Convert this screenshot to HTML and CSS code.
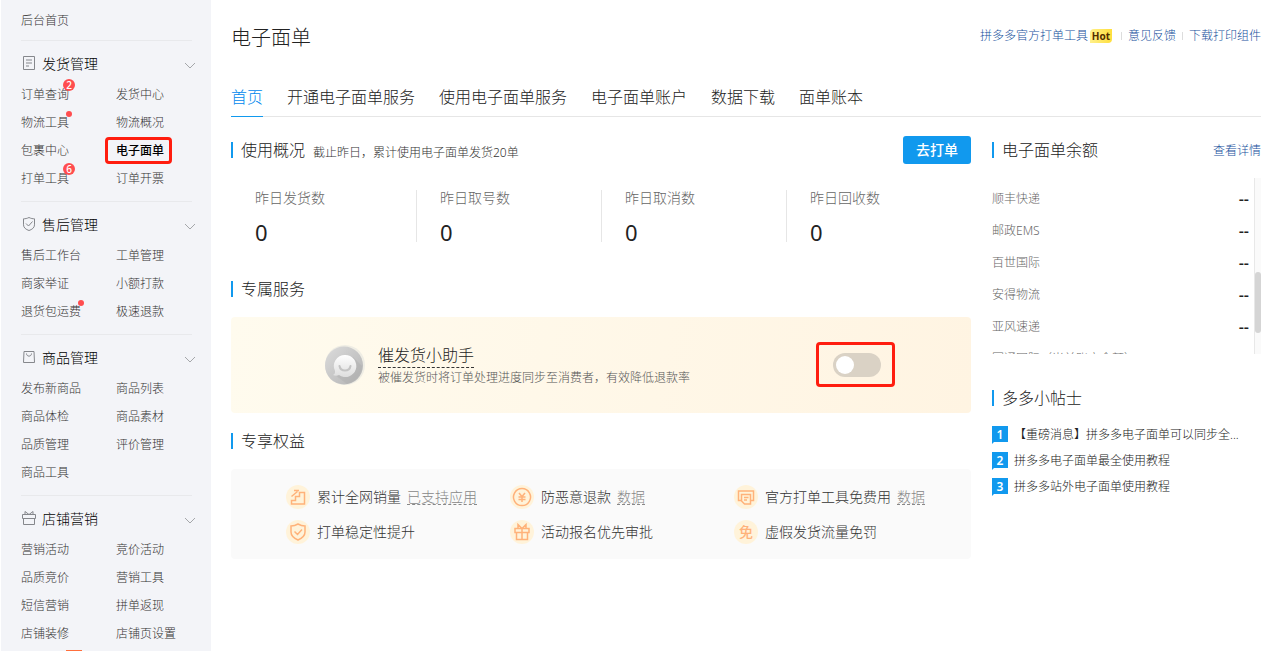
FILE: index.html
```html
<!DOCTYPE html>
<html lang="zh-CN">
<head>
    <meta charset="UTF-8">
    <meta name="viewport" content="width=device-width, initial-scale=1">
    <title>电子面单</title>
    <link rel="stylesheet" href="styles.css">
</head>
<body>
    <div class="layout">
        <nav class="sidebar">
            <a class="home" href="#">后台首页</a>
            <section class="group">
                <h2>
                    <svg class="group-icon" viewBox="0 0 16 16"><path d="M2.5 1.5h11v13h-11zM5 5h6M5 8h6M5 11h3"/></svg>
                    <span>发货管理</span>
                    <svg class="chevron" viewBox="0 0 12 8"><path d="M1 1l5 5 5-5"/></svg>
                </h2>
                <ul>
                    <li><a href="#">订单查询<i class="count">2</i></a></li>
                    <li><a href="#">发货中心</a></li>
                    <li><a href="#">物流工具<i class="dot"></i></a></li>
                    <li><a href="#">物流概况</a></li>
                    <li><a href="#">包裹中心</a></li>
                    <li><a class="active" href="#">电子面单</a></li>
                    <li><a href="#">打单工具<i class="count">6</i></a></li>
                    <li><a href="#">订单开票</a></li>
                </ul>
            </section>
            <section class="group">
                <h2>
                    <svg class="group-icon" viewBox="0 0 16 16"><path d="M8 1.5c2 1 3.800 1.300 5.500 1.300v6c0 3-2.500 4.700-5.500 5.700-3-1-5.500-2.700-5.500-5.700v-6C4.200 2.800 6 2.500 8 1.500zM5 7.500l2.500 2.500L11.500 5.500"/></svg>
                    <span>售后管理</span>
                    <svg class="chevron" viewBox="0 0 12 8"><path d="M1 1l5 5 5-5"/></svg>
                </h2>
                <ul>
                    <li><a href="#">售后工作台</a></li>
                    <li><a href="#">工单管理</a></li>
                    <li><a href="#">商家举证</a></li>
                    <li><a href="#">小额打款</a></li>
                    <li><a href="#">退货包运费<i class="dot"></i></a></li>
                    <li><a href="#">极速退款</a></li>
                </ul>
            </section>
            <section class="group">
                <h2>
                    <svg class="group-icon" viewBox="0 0 16 16"><path d="M3 2.500h10l.5 11h-11zM5.500 4.500c0 3.500 5 3.500 5 0"/></svg>
                    <span>商品管理</span>
                    <svg class="chevron" viewBox="0 0 12 8"><path d="M1 1l5 5 5-5"/></svg>
                </h2>
                <ul>
                    <li><a href="#">发布新商品</a></li>
                    <li><a href="#">商品列表</a></li>
                    <li><a href="#">商品体检</a></li>
                    <li><a href="#">商品素材</a></li>
                    <li><a href="#">品质管理</a></li>
                    <li><a href="#">评价管理</a></li>
                    <li><a href="#">商品工具</a></li>
                </ul>
            </section>
            <section class="group">
                <h2>
                    <svg class="group-icon" viewBox="0 0 16 16"><path d="M1.500 4.500h13v4h-13zM2.500 8.500v6h11v-6M8 4.500L4 1.500v3M8 4.500l4-3v3"/></svg>
                    <span>店铺营销</span>
                    <svg class="chevron" viewBox="0 0 12 8"><path d="M1 1l5 5 5-5"/></svg>
                </h2>
                <ul>
                    <li><a href="#">营销活动</a></li>
                    <li><a href="#">竞价活动</a></li>
                    <li><a href="#">品质竞价</a></li>
                    <li><a href="#">营销工具</a></li>
                    <li><a href="#">短信营销</a></li>
                    <li><a href="#">拼单返现</a></li>
                    <li><a href="#">店铺装修</a></li>
                    <li><a href="#">店铺页设置</a></li>
                    <li class="more"><i class="tag"></i></li>
                </ul>
            </section>
        </nav>

        <main class="main">
            <header class="page-head">
                <h1>电子面单</h1>
                <div class="links">
                    <a href="#">拼多多官方打单工具<b class="hot">Hot</b></a>
                    <a href="#">意见反馈</a>
                    <a href="#">下载打印组件</a>
                </div>
            </header>
            <nav class="tabs">
                <a class="current" href="#">首页</a>
                <a href="#">开通电子面单服务</a>
                <a href="#">使用电子面单服务</a>
                <a href="#">电子面单账户</a>
                <a href="#">数据下载</a>
                <a href="#">面单账本</a>
            </nav>

            <div class="columns">
                <div class="content">
                    <div class="section-head">
                        <h3>使用概况</h3>
                        <small>截止昨日，累计使用电子面单发货20单</small>
                        <button class="print-btn" type="button">去打单</button>
                    </div>
                    <dl class="stats">
                        <div><dt>昨日发货数</dt><dd>0</dd></div>
                        <div><dt>昨日取号数</dt><dd>0</dd></div>
                        <div><dt>昨日取消数</dt><dd>0</dd></div>
                        <div><dt>昨日回收数</dt><dd>0</dd></div>
                    </dl>

                    <div class="section-head"><h3>专属服务</h3></div>
                    <div class="service">
                        <svg class="service-icon" viewBox="0 0 40 40">
                            <defs>
                                <linearGradient id="disc" x1="0" y1="0" x2="1" y2="1"><stop offset="0" stop-color="#dcdcdc"/><stop offset="1" stop-color="#b2b2b2"/></linearGradient>
                                <linearGradient id="bubble" x1="0" y1="0" x2="0" y2="1"><stop offset="0" stop-color="#fff"/><stop offset="1" stop-color="#dedede"/></linearGradient>
                            </defs>
                            <circle cx="20" cy="20" r="20" fill="#efede4"/>
                            <circle cx="19" cy="20.500" r="19" fill="url(#disc)"/>
                            <path d="M28 12l9 9a19 19 0 0 1-15 18L10 30z" fill="#aaa" opacity=".35"/>
                            <path d="M20 10a11 11 0 1 1-6 20c-2 1-4 1-6 0 2-1 2-2 2-4a11 11 0 0 1 10-16z" fill="url(#bubble)"/>
                            <path d="M14.500 21c1 6 10 6 11 0" fill="none" stroke="#c4c4c4" stroke-width="2" stroke-linecap="round"/>
                        </svg>
                        <div class="service-text">
                            <label for="urge">催发货小助手</label>
                            <p>被催发货时将订单处理进度同步至消费者，有效降低退款率</p>
                        </div>
                        <span class="switch"><input type="checkbox" id="urge"></span>
                    </div>

                    <div class="section-head"><h3>专享权益</h3></div>
                    <ul class="benefits">
                        <li>
                            <svg viewBox="0 0 24 24"><circle cx="12" cy="12" r="12"/><path d="M5.500 19v-3.500h4v-4h4v-4h5V19zM5.500 11.500l6-5M8 5.500h5"/></svg>
                            <span>累计全网销量</span><a href="#">已支持应用</a>
                        </li>
                        <li>
                            <svg viewBox="0 0 24 24"><circle cx="12" cy="12" r="12"/><path d="M12 3.500a8.500 8.500 0 1 0 .01 0zM9 8l3 3.500L15 8M8.500 12h7M8.500 14.500h7M12 11.500V17"/></svg>
                            <span>防恶意退款</span><a href="#">数据</a>
                        </li>
                        <li>
                            <svg viewBox="0 0 24 24"><circle cx="12" cy="12" r="12"/><path d="M7 15.500H4.500V6h15v9.500H17M7.500 9.500h9V19h-6l-3-3zM10 12.500h4.500M10 15h3"/></svg>
                            <span>官方打单工具免费用</span><a href="#">数据</a>
                        </li>
                        <li>
                            <svg viewBox="0 0 24 24"><circle cx="12" cy="12" r="12"/><path d="M12 4c2.500 1.500 4.800 2 7 2v6c0 4-3.500 6.500-7 8-3.500-1.500-7-4-7-8V6c2.200 0 4.500-.5 7-2zM8.500 11.500l3 3 4.500-5"/></svg>
                            <span>打单稳定性提升</span>
                        </li>
                        <li>
                            <svg viewBox="0 0 24 24"><circle cx="12" cy="12" r="12"/><path d="M5 8.500h14v4H5zM6.500 12.500v7h11v-7M12 8.500v11M12 8.500L8 4.500v4M12 8.500l4-4v4"/></svg>
                            <span>活动报名优先审批</span>
                        </li>
                        <li>
                            <b class="free">免</b>
                            <span>虚假发货流量免罚</span>
                        </li>
                    </ul>
                </div>

                <aside class="side">
                    <div class="section-head">
                        <h3>电子面单余额</h3>
                        <a class="detail" href="#">查看详情</a>
                    </div>
                    <div class="balance">
                        <ul>
                            <li><span>顺丰快递</span><b>--</b></li>
                            <li><span>邮政EMS</span><b>--</b></li>
                            <li><span>百世国际</span><b>--</b></li>
                            <li><span>安得物流</span><b>--</b></li>
                            <li><span>亚风速递</span><b>--</b></li>
                            <li><span>圆通国际（当前账户余额）</span><b class="empty">0</b></li>
                        </ul>
                        <div class="scrollbar"><div class="thumb"></div></div>
                    </div>

                    <div class="section-head tips-head"><h3>多多小帖士</h3></div>
                    <ol class="tips">
                        <li><b>1</b><a href="#">【重磅消息】拼多多电子面单可以同步全...</a></li>
                        <li><b>2</b><a href="#">拼多多电子面单最全使用教程</a></li>
                        <li><b>3</b><a href="#">拼多多站外电子面单使用教程</a></li>
                    </ol>
                </aside>
            </div>
        </main>
    </div>
</body>
</html>
```
FILE: styles.css
```css
* { box-sizing: border-box; }
body {
    margin: 0;
    font-family: "Noto Sans", "Noto Sans CJK SC", sans-serif;
    font-size: 12px;
    font-weight: 300;
    color: #222;
    background: #fff;
}
h1, h2, h3, p, ul, ol, dl, dd {
    margin: 0;
    padding: 0;
    font-weight: 300;
}
ul, ol { list-style: none; }
a {
    color: inherit;
    text-decoration: none;
}
i { font-style: normal; }
.layout {
    display: flex;
    height: 100vh;
    overflow: hidden;
}

/* sidebar */
.sidebar {
    flex: 0 0 210px;
    margin-left: 1px;
    padding: 0 19px 0 20px;
    background: #f3f4f8;
    color: #333;
    overflow: hidden;
}
.home {
    display: block;
    padding-top: 2px;
    line-height: 38px;
}
.group {
    padding: 6px 0 8px;
    border-top: 1px solid #e8e9ec;
}
.group h2 {
    display: flex;
    align-items: center;
    height: 32px;
    margin: 0 -4px 2px 0;
    font-size: 14px;
    color: #000;
}
.group-icon {
    width: 16px;
    height: 16px;
    margin-right: 5px;
    fill: none;
    stroke: #85878c;
}
.chevron {
    width: 12px;
    height: 8px;
    margin: 6px 0 0 auto;
    fill: none;
    stroke: #a5a7aa;
}
.group ul {
    display: grid;
    grid-template-columns: 95px 1fr;
    line-height: 28px;
}
.group li { height: 28px; }
.group li a { position: relative; }
.group .active {
    color: #000;
    font-weight: 500;
}
.active::after {
    content: "";
    position: absolute;
    inset: -5px -8px -5px -11px;
    border: 3px solid #ff1d0f;
    border-radius: 4px;
}
.count, .dot {
    position: absolute;
    border-radius: 50%;
    background: #ff4d4f;
}
.count {
    top: -7px;
    right: -6px;
    width: 12px;
    height: 12px;
    font-size: 10px;
    font-weight: 500;
    line-height: 12px;
    text-align: center;
    color: #fff;
}
.dot {
    top: -3px;
    right: -3px;
    width: 6px;
    height: 6px;
}
.more { position: relative; }
.tag {
    position: absolute;
    top: 2px;
    left: 45px;
    width: 16px;
    height: 12px;
    background: #ff6f3c;
}

/* main */
.main {
    flex: 1;
    min-width: 0;
    padding: 0 21px 0 20px;
}
.page-head {
    display: flex;
    justify-content: space-between;
    align-items: center;
    height: 72px;
}
h1 {
    padding-top: 4px;
    font-size: 20px;
    line-height: 32px;
}
.links {
    display: flex;
    align-items: center;
    line-height: 16px;
    color: #16509c;
}
.links a {
    display: flex;
    align-items: center;
}
.links a + a::before {
    content: "";
    height: 8px;
    margin: 0 6px;
    border-left: 1px solid #ddd;
}
.hot {
    width: 22px;
    margin: 0 3px 0 2px;
    border-radius: 4px 0;
    background: linear-gradient(90deg, #fff08a, #ffdf3d);
    color: #522d00;
    font-size: 10px;
    font-weight: 700;
    line-height: 14px;
    text-align: center;
}
.tabs {
    display: flex;
    gap: 24px;
    height: 45px;
    border-bottom: 1px solid #e6e6e6;
    font-size: 16px;
}
.tabs a {
    height: 45px;
    padding-top: 8px;
    line-height: 34px;
}
.tabs .current {
    border-bottom: 1px solid #1199ee;
    color: #0088ee;
}
.columns {
    display: grid;
    grid-template-columns: minmax(0, 1fr) 269px;
    gap: 21px;
    padding-top: 19px;
}
.section-head {
    display: flex;
    align-items: center;
    height: 28px;
}
.section-head h3 {
    display: flex;
    align-items: center;
    gap: 8px;
    font-size: 16px;
    line-height: 28px;
}
.section-head h3::before {
    content: "";
    width: 2px;
    height: 16px;
    background: #1199ee;
}
.section-head small {
    margin-left: 8px;
    padding-top: 4px;
    font-size: 12px;
    color: #333;
}
.print-btn {
    width: 68px;
    height: 28px;
    margin-left: auto;
    padding: 0;
    border: none;
    border-radius: 3px;
    background: #1199ee;
    color: #fff;
    font-family: inherit;
    font-size: 14px;
    font-weight: 500;
    line-height: 28px;
    cursor: pointer;
}
.stats {
    display: grid;
    grid-template-columns: repeat(4, 1fr);
    margin: 26px 0 33px;
}
.stats div {
    height: 52px;
    padding-left: 24px;
}
.stats div + div {
    padding-left: 23px;
    border-left: 1px solid #e6e6e6;
}
.stats dt {
    font-size: 14px;
    line-height: 16px;
    color: #666;
}
.stats dd {
    margin-top: 16px;
    font-size: 22px;
    font-weight: 400;
    line-height: 20px;
}

.service {
    display: flex;
    align-items: center;
    gap: 13px;
    height: 96px;
    margin: 14px 0;
    padding: 0 90px 0 94px;
    border-radius: 4px;
    background: linear-gradient(100deg, #fffbee, #fff4e2);
}
.service-icon {
    width: 40px;
    height: 40px;
}
.service-text label {
    display: inline-block;
    border-bottom: 1px dashed #333;
    font-size: 16px;
    line-height: 24px;
}
.service-text p {
    line-height: 20px;
    color: #555;
}
.switch {
    position: relative;
    height: 24px;
    margin-left: auto;
}
.switch::after {
    content: "";
    position: absolute;
    inset: -11px -14px -10px -17px;
    border: 3px solid #ff1d0f;
    border-radius: 4px;
    pointer-events: none;
}
.switch input {
    appearance: none;
    display: block;
    width: 48px;
    height: 24px;
    margin: 0;
    padding: 3px;
    border-radius: 12px;
    background: #dad2c5;
    cursor: pointer;
}
.switch input::before {
    content: "";
    display: block;
    width: 18px;
    height: 18px;
    border-radius: 50%;
    background: #fff;
}
.switch input:checked { background: #1199ee; }
.switch input:checked::before { margin-left: auto; }

.benefits {
    display: grid;
    grid-template-columns: repeat(3, 224px);
    gap: 11px 0;
    margin-top: 14px;
    padding: 16px 0 15px 55px;
    border-radius: 4px;
    background: #fafafa;
    font-size: 14px;
    color: #333;
}
.benefits li {
    display: flex;
    align-items: center;
    height: 24px;
    white-space: nowrap;
}
.benefits span {
    padding-bottom: 2px;
}
.benefits svg {
    width: 24px;
    height: 24px;
    margin-right: 7px;
    fill: none;
    stroke: #ffb27a;
    stroke-width: 1.5;
}
.benefits circle {
    fill: #fff3da;
    stroke: none;
}
.benefits a {
    margin-left: 6px;
    border-bottom: 1px dashed #888;
    line-height: 15px;
    color: #888;
}
.free {
    width: 24px;
    height: 24px;
    margin-right: 7px;
    border-radius: 50%;
    background: #fff3da;
    color: #ffb27a;
    font-weight: 500;
    line-height: 24px;
    text-align: center;
}

/* right column */
.detail {
    margin-left: auto;
    color: #16509c;
}
.balance {
    display: flex;
    height: 176px;
    margin-top: 14px;
    overflow: hidden;
}
.balance ul {
    flex: 1;
    padding: 5px 5px 0 0;
}
.balance li {
    display: flex;
    justify-content: space-between;
    height: 32px;
    line-height: 32px;
    color: #666;
}
.balance b {
    font-size: 16px;
    font-weight: 500;
    color: #222;
}
.balance .empty {
    font-size: 14px;
    color: #f33;
}
.scrollbar {
    flex: 0 0 8px;
    margin-right: -1px;
    padding-top: 94px;
    border: solid #e8e8e8;
    border-width: 0 1px;
    background: #fafafa;
}
.thumb {
    height: 61px;
    border-radius: 3px;
    background: #d5d5d5;
}
.tips-head { margin-top: 30px; }
.tips { padding-top: 9px; }
.tips li {
    display: flex;
    align-items: center;
    gap: 6px;
    height: 26px;
    white-space: nowrap;
}
.tips b {
    position: relative;
    width: 16px;
    height: 16px;
    background: #1199ee;
    color: #fff;
    font-weight: 600;
    line-height: 18px;
    text-align: center;
}
.tips b::after {
    content: "";
    position: absolute;
    top: 16px;
    left: 0;
    border-top: 2px solid #1199ee;
    border-right: 2px solid transparent;
}
```
